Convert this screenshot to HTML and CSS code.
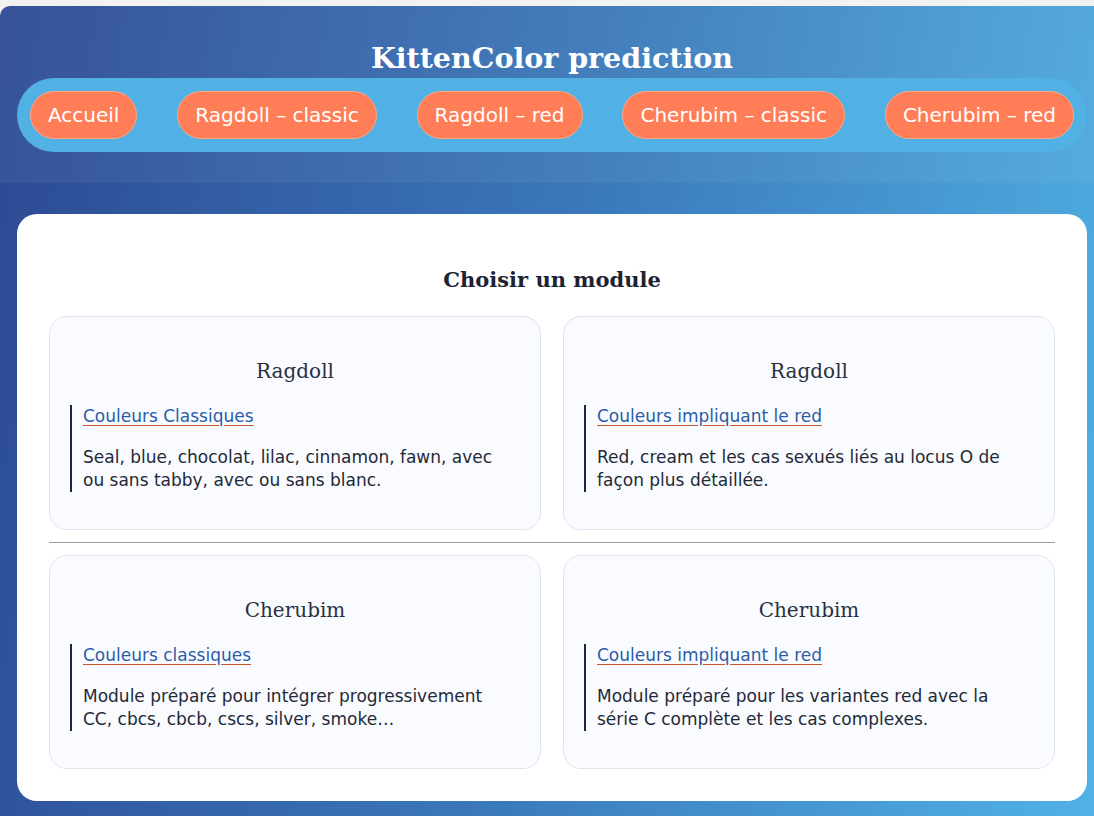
FILE: index.html
```html
<!DOCTYPE html>
<html lang="fr">
<head>
<meta charset="utf-8">
<title>KittenColor prediction</title>
<link rel="stylesheet" href="styles.css">
</head>
<body>
<header class="site-header">
  <h1 class="site-title">KittenColor prediction</h1>
  <nav class="nav">
    <a class="nav-btn" href="#">Accueil</a>
    <a class="nav-btn" href="#">Ragdoll – classic</a>
    <a class="nav-btn" href="#">Ragdoll – red</a>
    <a class="nav-btn" href="#">Cherubim – classic</a>
    <a class="nav-btn" href="#">Cherubim – red</a>
  </nav>
</header>
<main class="panel">
  <h2 class="panel-title">Choisir un module</h2>
  <div class="grid">
    <section class="card">
      <h3 class="card-title">Ragdoll</h3>
      <div class="card-body">
        <a class="card-link" href="#">Couleurs Classiques</a>
        <p class="card-text">Seal, blue, chocolat, lilac, cinnamon, fawn, avec ou sans tabby, avec ou sans blanc.</p>
      </div>
    </section>
    <section class="card">
      <h3 class="card-title">Ragdoll</h3>
      <div class="card-body">
        <a class="card-link" href="#">Couleurs impliquant le red</a>
        <p class="card-text">Red, cream et les cas sexués liés au locus O de façon plus détaillée.</p>
      </div>
    </section>
  </div>
  <hr class="sep">
  <div class="grid">
    <section class="card">
      <h3 class="card-title">Cherubim</h3>
      <div class="card-body">
        <a class="card-link" href="#">Couleurs classiques</a>
        <p class="card-text">Module préparé pour intégrer progressivement CC, cbcs, cbcb, cscs, silver, smoke…</p>
      </div>
    </section>
    <section class="card">
      <h3 class="card-title">Cherubim</h3>
      <div class="card-body">
        <a class="card-link" href="#">Couleurs impliquant le red</a>
        <p class="card-text">Module préparé pour les variantes red avec la série C complète et les cas complexes.</p>
      </div>
    </section>
  </div>
</main>
</body>
</html>
```
FILE: styles.css
```css
html {
  background: #f2f2f2;
}
body {
  margin: 6px 0 0 0;
  padding: 0 7px 14px 17px;
  min-height: 810px;
  box-sizing: border-box;
  border-top-left-radius: 10px;
  background: linear-gradient(100deg, #2c4993 0%, #3a78ba 50%, #50b2e5 100%);
  font-family: "DejaVu Sans", "Noto Sans", sans-serif;
  color: #1f2937;
}
.site-header {
  margin: 0 -7px 0 -17px;
  padding: 33px 7px 31px 17px;
  background: rgba(255, 255, 255, 0.05);
  border-top-left-radius: 10px;
}
.site-title {
  margin: 0 0 1px;
  text-align: center;
  color: #fff;
  font-family: "DejaVu Serif", serif;
  font-weight: bold;
  font-size: 28.5px;
  line-height: 38px;
}
.nav {
  display: flex;
  justify-content: space-between;
  align-items: center;
  background: #52b1e4;
  border-radius: 37px;
  padding: 13px;
}
.nav-btn {
  display: block;
  height: 46px;
  line-height: 46px;
  padding: 0 17px;
  border: 1px solid #ffa485;
  border-radius: 24px;
  background: #ff7e57;
  color: #fff;
  font-size: 20px;
  text-decoration: none;
}
.panel {
  margin-top: 31px;
  background: #fff;
  border-radius: 20px;
  padding: 52px 32px 32px;
}
.panel-title {
  margin: 0 0 22px;
  text-align: center;
  font-family: "DejaVu Serif", serif;
  font-weight: bold;
  font-size: 21px;
  line-height: 28px;
  color: #1c2333;
}
.grid {
  display: grid;
  grid-template-columns: 1fr 1fr;
  gap: 22px;
}
.card {
  background: #f9fbff;
  border: 1px solid #dfe5ef;
  border-radius: 18px;
  padding: 20px 20px 37px;
}
.card-title {
  margin: 20px 0 20px;
  text-align: center;
  font-family: "DejaVu Serif", serif;
  font-weight: normal;
  font-size: 20px;
  line-height: 28px;
  color: #2b3140;
}
.card-body {
  border-left: 2px solid #1c2640;
  padding: 0 20px 0 11px;
}
.card-link {
  display: inline-block;
  font-size: 17px;
  line-height: 23px;
  color: #2b5ba8;
  text-decoration: underline;
  text-decoration-color: #c4582c;
  text-underline-offset: 3px;
}
.card-text {
  margin: 18px 0 0;
  font-size: 17px;
  line-height: 23px;
  color: #1f2937;
}
.sep {
  margin: 12px 0;
  border: 0;
  border-top: 1px solid #9a9a9a;
}
```
